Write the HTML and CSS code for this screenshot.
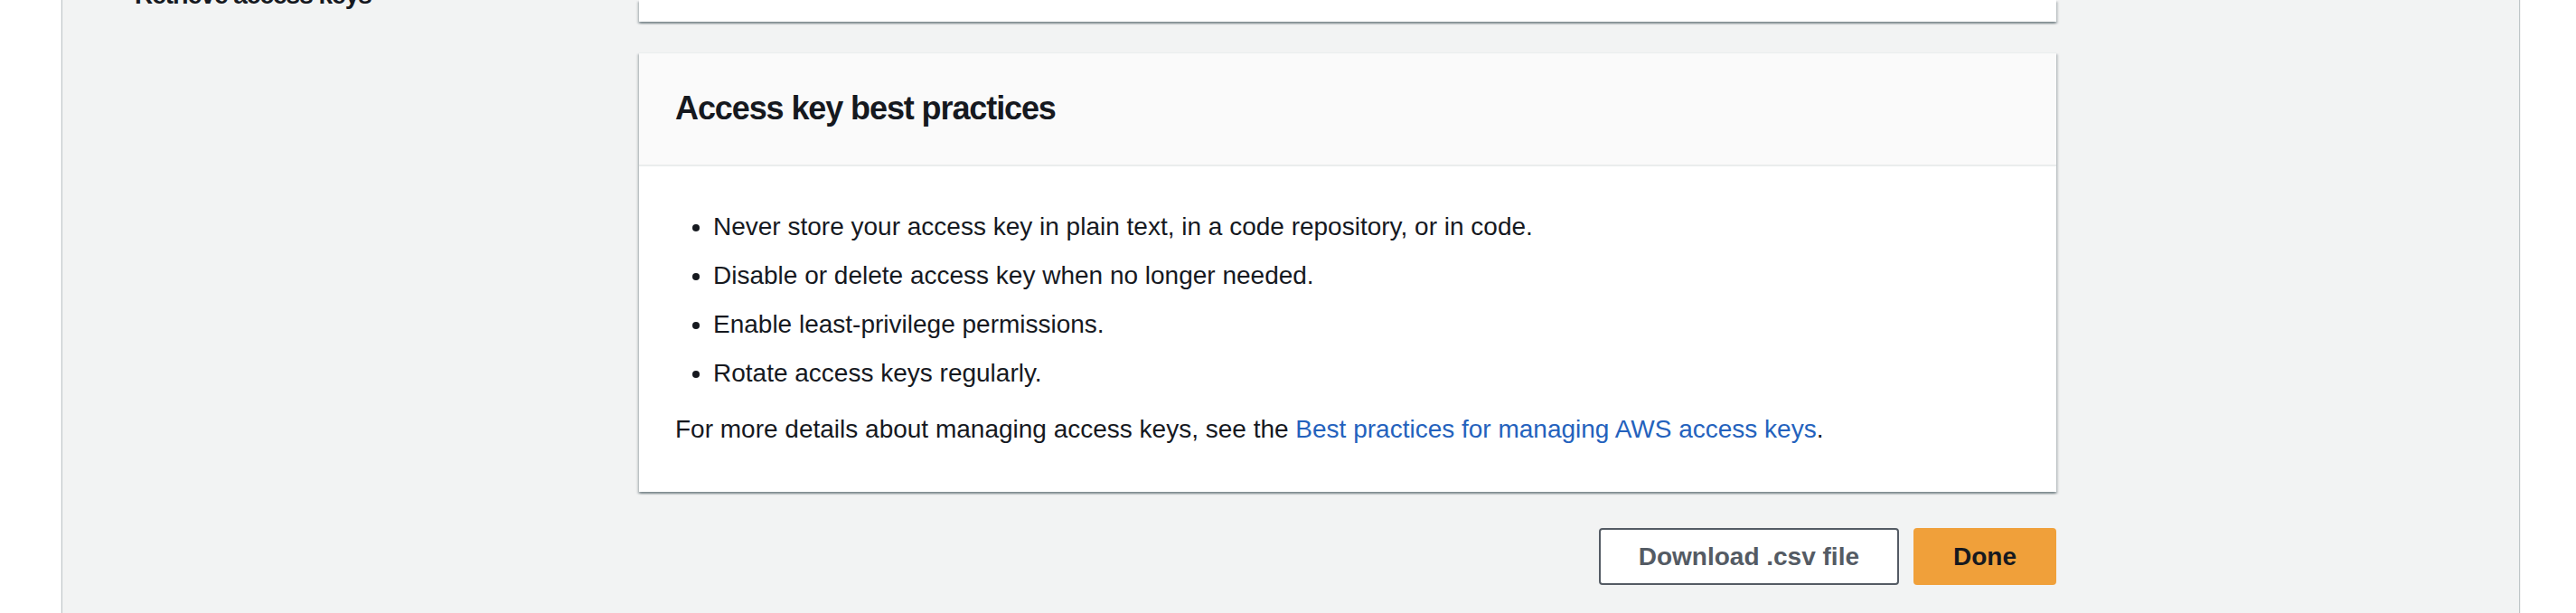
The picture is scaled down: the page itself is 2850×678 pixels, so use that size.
FILE: index.html
```html
<!DOCTYPE html>
<html lang="en">
<head>
<meta charset="utf-8">
<title>Retrieve access keys</title>
<link rel="stylesheet" href="styles.css">
</head>
<body>
<div class="panel">
  <nav class="side">
    <div class="side-item">Retrieve access keys</div>
  </nav>
  <main class="main">
    <div class="card card-top"></div>
    <section class="card">
      <header class="card-header">
        <h2 class="card-title">Access key best practices</h2>
      </header>
      <div class="card-body">
        <ul class="tips">
          <li>Never store your access key in plain text, in a code repository, or in code.</li>
          <li>Disable or delete access key when no longer needed.</li>
          <li>Enable least-privilege permissions.</li>
          <li>Rotate access keys regularly.</li>
        </ul>
        <p class="more">For more details about managing access keys, see the <a class="link" href="#">Best practices for managing AWS access keys</a>.</p>
      </div>
    </section>
    <div class="actions">
      <button class="btn btn-normal" type="button">Download .csv file</button>
      <button class="btn btn-primary" type="button">Done</button>
    </div>
  </main>
</div>
</body>
</html>
```
FILE: styles.css
```css
html, body {
  margin: 0;
  padding: 0;
  background: #ffffff;
  overflow: hidden;
}

body {
  font-family: "Liberation Sans", Arial, sans-serif;
  color: #16191f;
  font-size: 28px;
  line-height: 40px;
}

.panel {
  margin-left: 69px;
  width: 2718px;
  min-height: 678px;
  background: #f2f3f3;
  box-shadow: -1px 0 1px 0 rgba(0, 28, 36, 0.25), 1px 0 1px 0 rgba(0, 28, 36, 0.25);
  display: grid;
  grid-template-columns: 638px 1568px;
  align-items: start;
}

.side {
  padding-left: 80px;
}

.side-item {
  margin-top: -25px;
  font-weight: 700;
  letter-spacing: -1px;
}

.main {
  display: flex;
  flex-direction: column;
}

.card {
  background: #ffffff;
  border-top: 1px solid #eaeded;
  box-shadow: 0 2px 2px 0 rgba(0, 28, 36, 0.3), 2px 2px 2px 0 rgba(0, 28, 36, 0.15), -2px 2px 2px 0 rgba(0, 28, 36, 0.15);
}

.card-top {
  height: 24px;
  border-top: 0;
  margin-bottom: 34px;
}

.card-header {
  background: #fafafa;
  border-bottom: 2px solid #eaeded;
  padding: 39px 40px 40px;
}

.card-title {
  margin: 0;
  font-size: 36px;
  line-height: 44px;
  font-weight: 700;
  letter-spacing: -1.1px;
}

.card-body {
  padding: 47px 40px 49px;
}

.tips {
  margin: 0;
  padding-left: 42px;
}

.tips li + li {
  margin-top: 14px;
}

.more {
  margin: 22px 0 0;
}

.link {
  color: #2462bd;
  text-decoration: none;
}

.actions {
  display: flex;
  justify-content: flex-end;
  gap: 16px;
  margin-top: 40px;
}

.btn {
  font-family: "Liberation Sans", Arial, sans-serif;
  font-size: 28px;
  font-weight: 700;
  line-height: 39px;
  padding: 10px 42px;
  border-radius: 4px;
  border: 2px solid #545b64;
  cursor: pointer;
}

.btn-normal {
  background: #ffffff;
  color: #545b64;
}

.btn-primary {
  background: #f0a03a;
  border-color: #f0a03a;
  color: #16191f;
}
```
